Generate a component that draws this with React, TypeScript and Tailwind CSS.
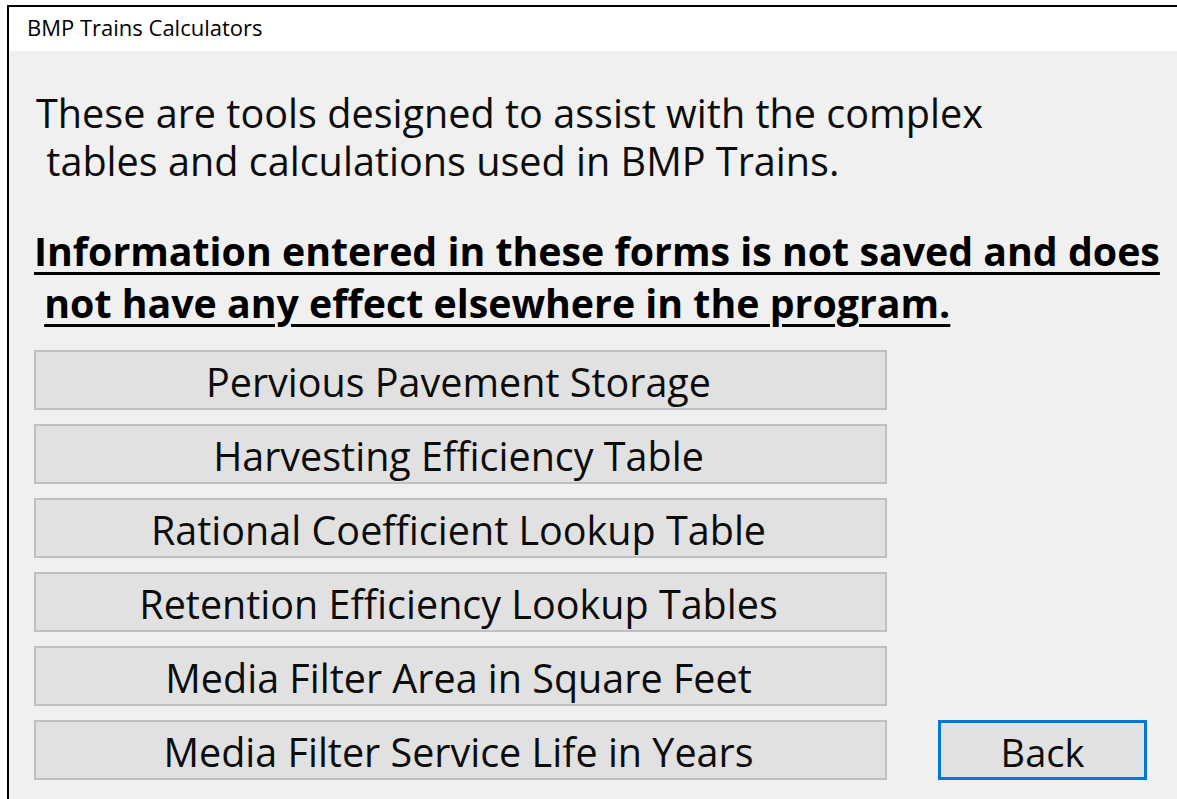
const tools = [
  "Pervious Pavement Storage",
  "Harvesting Efficiency Table",
  "Rational Coefficient Lookup Table",
  "Retention Efficiency Lookup Tables",
  "Media Filter Area in Square Feet",
  "Media Filter Service Life in Years",
];

const font = { fontFamily: '"Open Sans", "Noto Sans", sans-serif' };

export default function App() {
  return (
    <div className="w-[1177px] h-[799px] bg-white pt-[5px] pl-[7px] overflow-hidden" style={font}>
      <div className="h-full border-t-2 border-l-2 border-black flex flex-col">
        <div className="h-[44px] shrink-0 bg-white pl-[18px] pt-[6px] text-[22px] leading-[28px] text-black">
          BMP Trains Calculators
        </div>
        <div className="flex-1 bg-[#f0f0f0] pl-[25px] text-[#0c0c0c]">
          <p className="mt-[38px] ml-[2px] text-[39.6px] leading-[48px] whitespace-pre">
            {"These are tools designed to assist with the complex\n tables and calculations used in BMP Trains."}
          </p>
          <p className="mt-[40px] text-[39.3px] leading-[52px] font-bold whitespace-pre text-black">
            <span className="underline underline-offset-[6px] decoration-[3px]">
              Information entered in these forms is not saved and does
            </span>
            {"\n "}
            <span className="underline underline-offset-[6px] decoration-[3px]">
              not have any effect elsewhere in the program.
            </span>
          </p>
          <div className="mt-[21px] flex items-end gap-[51px]">
            <div className="flex flex-col gap-[14px] w-[853px]">
              {tools.map((t) => (
                <button
                  key={t}
                  className="h-[60px] pt-[5px] pr-[4px] bg-[#e1e1e1] border-2 border-[#c0c0c0] text-[39.5px] leading-none text-[#0c0c0c]"
                >
                  {t}
                </button>
              ))}
            </div>
            <button className="w-[209px] h-[60px] pt-[4px] bg-[#e1e1e1] border-[3px] border-[#0078d7] text-[38px] leading-none text-[#0c0c0c]">
              Back
            </button>
          </div>
        </div>
      </div>
    </div>
  );
}
